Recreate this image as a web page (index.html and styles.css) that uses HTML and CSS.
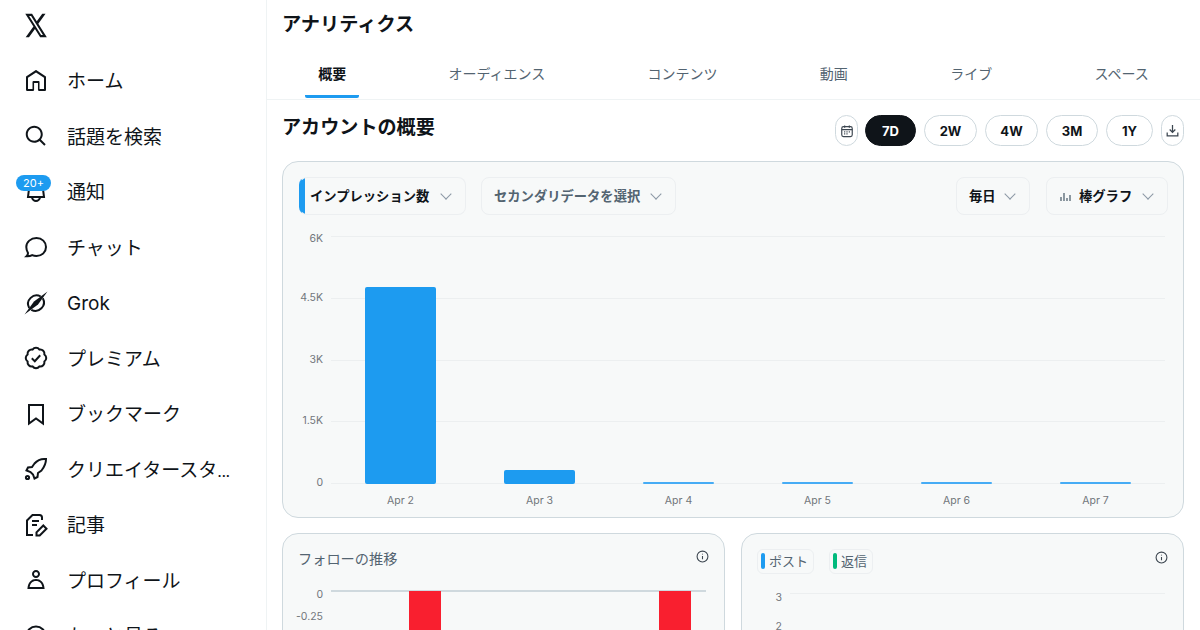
FILE: index.html
```html
<!DOCTYPE html>
<html lang="ja">
<head>
  <meta charset="UTF-8" />
  <title>アナリティクス</title>
  <link rel="stylesheet" href="styles.css">
</head>
<body>

  <aside class="sidebar">
    <div class="logo">
      <svg class="logo-icon" viewBox="0 0 24 24" preserveAspectRatio="none"><path class="fill" d="M18.244 2.25h3.308l-7.227 8.26 8.502 11.24H16.17l-5.214-6.817L4.99 21.75H1.68l7.73-8.835L1.254 2.25H8.08l4.713 6.231zm-1.161 17.52h1.833L7.084 4.126H5.117z"/></svg>
    </div>
    <nav>
      <a class="nav-item">
        <svg class="icon" viewBox="0 0 24 24"><path class="fill" d="M21.591 7.146L12.52 1.157c-.316-.21-.724-.21-1.04 0l-9.071 5.99c-.26.173-.409.456-.409.757v13.183c0 .502.418.913.929.913H9.14c.51 0 .929-.41.929-.913v-7.075h3.909v7.075c0 .502.417.913.928.913h6.165c.511 0 .929-.41.929-.913V7.904c0-.301-.158-.584-.408-.758zM20 20l-4.5.01.011-7.097c0-.502-.418-.913-.928-.913H9.44c-.511 0-.929.41-.929.913L8.5 20H4V8.773l8.011-5.342L20 8.764z"/></svg>
        <span>ホーム</span>
      </a>
      <a class="nav-item">
        <svg class="icon" viewBox="0 0 24 24"><path class="fill" d="M10.25 3.75c-3.59 0-6.5 2.91-6.5 6.5s2.91 6.5 6.5 6.5c1.795 0 3.419-.726 4.596-1.904 1.178-1.177 1.904-2.801 1.904-4.596 0-3.59-2.91-6.5-6.5-6.5zm-8.5 6.5c0-4.694 3.806-8.5 8.5-8.5s8.5 3.806 8.5 8.5c0 1.986-.682 3.815-1.824 5.262l4.781 4.781-1.414 1.414-4.781-4.781c-1.447 1.142-3.276 1.824-5.262 1.824-4.694 0-8.5-3.806-8.5-8.5z"/></svg>
        <span>話題を検索</span>
      </a>
      <a class="nav-item">
        <div class="icon-wrap">
          <svg class="icon" viewBox="0 0 24 24"><path class="fill" d="M19.993 9.042C19.48 5.017 16.054 2 11.996 2s-7.49 3.021-7.999 7.051L2.866 18H7.1c.463 2.282 2.481 4 4.9 4s4.437-1.718 4.9-4h4.236l-1.143-8.958zM12 20c-1.306 0-2.417-.835-2.829-2h5.658c-.412 1.165-1.523 2-2.829 2zm-6.866-4l.847-6.698C6.364 6.272 8.941 4 11.996 4s5.627 2.268 6.013 5.295L18.864 16H5.134z"/></svg>
          <b class="badge">20+</b>
        </div>
        <span>通知</span>
      </a>
      <a class="nav-item">
        <svg class="icon" viewBox="0 0 24 24"><path class="line" d="M12.500 3C18 3 22 7 22 12s-4 9-9.500 9c-1.600 0-3-.3-4.300-.9-1.500.9-3.500 1.300-5.700 1.200 1-.9 1.500-2 1.500-3.200C2.900 16.200 2.300 14.100 2.300 12 2.300 7 6.800 3 12.500 3z"/></svg>
        <span>チャット</span>
      </a>
      <a class="nav-item">
        <svg class="icon" viewBox="0 0 24 24"><path class="line" d="M16.800 5.500A8.500 8.500 0 0 0 5.200 17M7.300 18.800A8.500 8.500 0 0 0 18.800 7.200"/><path class="fill" d="M.5 23.500L10 10.500 23.500.5 14 13.500z"/></svg>
        <span class="latin">Grok</span>
      </a>
      <a class="nav-item">
        <svg class="icon" viewBox="0 0 24 24"><path class="line" d="M8.520 3.590c.8-1.100 2.040-1.840 3.480-1.840s2.680.74 3.490 1.840c1.340-.21 2.740.14 3.760 1.160s1.370 2.420 1.160 3.770c1.100.8 1.840 2.040 1.840 3.480s-.74 2.680-1.840 3.480c.21 1.340-.14 2.750-1.160 3.770s-2.420 1.370-3.760 1.160c-.8 1.100-2.050 1.840-3.490 1.840s-2.680-.74-3.480-1.840c-1.340.21-2.750-.14-3.770-1.160-1.010-1.020-1.370-2.420-1.160-3.770-1.090-.8-1.840-2.040-1.840-3.480s.75-2.680 1.840-3.480c-.21-1.350.14-2.750 1.160-3.770s2.430-1.370 3.770-1.160z"/><path class="line" d="M7.800 12.300l3 2.900 5.400-5.900"/></svg>
        <span>プレミアム</span>
      </a>
      <a class="nav-item">
        <svg class="icon" viewBox="0 0 24 24"><path class="line" d="M5 3h14v18.500l-7-5-7 5z"/></svg>
        <span>ブックマーク</span>
      </a>
      <a class="nav-item">
        <svg class="icon" viewBox="0 0 24 24"><path class="line" d="M22 2c-4.500-.5-8.500 1-11.500 4.500L8 10l-4 .5-1.500 3 4 1.500 2.500 2.500 1.500 4 3-1.500.5-4 3.500-2.500C19.500 11 22 7 22 2z"/><circle class="line" cx="3.500" cy="20.500" r="1.600"/></svg>
        <span>クリエイタースタ<span class="dots">...</span></span>
      </a>
      <a class="nav-item">
        <svg class="icon" viewBox="0 0 24 24"><path class="line" d="M18 7V4.500C18 3 17 2 15.500 2h-7L3 7.500V22h6"/><path class="line" d="M8 8h7M8 12h5"/><path class="line" d="M12.500 22.500v-3.200l6.800-6.800 3.200 3.200-6.800 6.800z"/></svg>
        <span>記事</span>
      </a>
      <a class="nav-item">
        <svg class="icon" viewBox="0 0 24 24"><path class="fill" d="M5.651 19h12.698c-.337-1.800-1.023-3.210-1.945-4.190C15.318 13.650 13.838 13 12 13s-3.317.65-4.404 1.810c-.922.98-1.608 2.390-1.945 4.190zm.486-5.560C7.627 11.850 9.648 11 12 11s4.373.85 5.863 2.440c1.477 1.580 2.366 3.800 2.632 6.460l.11 1.100H3.395l.11-1.100c.266-2.660 1.155-4.880 2.632-6.460zM12 4c-1.105 0-2 .9-2 2s.895 2 2 2 2-.9 2-2-.895-2-2-2zM8 6c0-2.210 1.791-4 4-4s4 1.790 4 4-1.791 4-4 4-4-1.790-4-4z"/></svg>
        <span>プロフィール</span>
      </a>
      <a class="nav-item">
        <svg class="icon" viewBox="0 0 24 24"><circle class="line" cx="12" cy="12" r="9.500"/></svg>
        <span>もっと見る</span>
      </a>
    </nav>
  </aside>

  <main class="content">
    <header class="page-head">
      <h1>アナリティクス</h1>
      <div class="tabs">
        <a class="tab active">概要</a>
        <a class="tab">オーディエンス</a>
        <a class="tab">コンテンツ</a>
        <a class="tab">動画</a>
        <a class="tab">ライブ</a>
        <a class="tab">スペース</a>
      </div>
    </header>

    <section class="overview">
      <div class="overview-head">
        <h2>アカウントの概要</h2>
        <div class="ranges">
          <button class="range icon-btn calendar">
            <svg viewBox="0 0 24 24" width="14" height="14"><rect class="line small" x="3" y="4.500" width="18" height="17" rx="3"/><path class="line small" d="M3 9.500h18M8 2.500v4M16 2.500v4M7 13.500h2M11 13.500h2M15 13.500h2M7 17h2M11 17h2"/></svg>
          </button>
          <button class="range selected">7D</button>
          <button class="range">2W</button>
          <button class="range">4W</button>
          <button class="range w-52">3M</button>
          <button class="range w-47">1Y</button>
          <button class="range icon-btn">
            <svg viewBox="0 0 24 24" width="15" height="15"><path class="line small" d="M12 3v12M7.500 10.500L12 15l4.500-4.500M3.500 15v5.500h17V15"/></svg>
          </button>
        </div>
      </div>

      <div class="card main-chart">
        <div class="filters">
          <div class="select primary w-167"><span>インプレッション数</span><i class="chev"></i></div>
          <div class="select muted w-195"><span>セカンダリデータを選択</span><i class="chev"></i></div>
          <div class="select w-74 push"><span>毎日</span><i class="chev"></i></div>
          <div class="select w-122">
            <svg class="bars-svg" viewBox="0 0 12 12" width="12" height="12"><path class="bars-icon" d="M2 11V7M5 11V3M8 11V8M11 11V5"/></svg>
            <span>棒グラフ</span><i class="chev"></i>
          </div>
        </div>

        <div class="plot">
          <div class="grid">
            <div class="grid-row top"><small>6K</small><hr></div>
            <div class="grid-row"><small>4.5K</small><hr></div>
            <div class="grid-row"><small>3K</small><hr></div>
            <div class="grid-row"><small>1.5K</small><hr></div>
            <div class="grid-row"><small>0</small><hr></div>
          </div>
          <div class="columns">
            <div class="col"><div class="bar" style="height: 197px"></div></div>
            <div class="col"><div class="bar" style="height: 14px"></div></div>
            <div class="col"><div class="bar thin"></div></div>
            <div class="col"><div class="bar thin"></div></div>
            <div class="col"><div class="bar thin"></div></div>
            <div class="col"><div class="bar thin"></div></div>
          </div>
        </div>
        <div class="x-axis">
          <span>Apr 2</span><span>Apr 3</span><span>Apr 4</span><span>Apr 5</span><span>Apr 6</span><span>Apr 7</span>
        </div>
      </div>

      <div class="lower">
        <div class="card small-card">
          <div class="small-head">
            <h3>フォローの推移</h3>
            <svg class="info" viewBox="0 0 24 24"><circle class="line small" cx="12" cy="12" r="10"/><path class="line small" d="M12 11v6M12 7v1.500"/></svg>
          </div>
          <div class="follow-plot">
            <div class="follow-labels"><small>0</small><small>-0.25</small></div>
            <div class="follow-area">
              <div class="red-bar"></div>
              <div class="red-bar"></div>
            </div>
          </div>
        </div>

        <div class="card small-card">
          <div class="small-head">
            <div class="chips">
              <div class="chip"><i class="tag blue"></i>ポスト</div>
              <div class="chip"><i class="tag green"></i>返信</div>
            </div>
            <svg class="info low" viewBox="0 0 24 24"><circle class="line small" cx="12" cy="12" r="10"/><path class="line small" d="M12 11v6M12 7v1.500"/></svg>
          </div>
          <div class="posts-plot">
            <div class="grid-row"><small>3</small><hr></div>
            <div class="grid-row"><small>2</small></div>
          </div>
        </div>
      </div>
    </section>
  </main>

</body>
</html>
```

FILE: styles.css
```css
body {
  margin: 0;
  display: flex;
  height: 630px;
  overflow: hidden;
  background-color: white;
  color: #0f1419;
  font-family: Inter, "Noto Sans CJK JP", sans-serif;
}

.fill {
  fill: #0f1419;
}

.line {
  fill: none;
  stroke: #0f1419;
  stroke-width: 2;
}

.line.small {
  stroke: #3c4650;
}

/* sidebar */
.sidebar {
  width: 266px;
  flex-shrink: 0;
  border-right: 1px solid #eff3f4;
}

.logo {
  height: 50px;
  padding-left: 24px;
  display: flex;
  align-items: center;
  margin-bottom: 3px;
}

.logo-icon {
  display: block;
  width: 24px;
  height: 29px;
}

.icon {
  display: block;
  width: 24px;
  height: 24px;
}

.nav-item {
  display: flex;
  align-items: center;
  gap: 19px;
  height: 55.5px;
  padding-left: 24px;
  font-size: 19px;
  white-space: nowrap;
}

.nav-item > span {
  margin-top: -2px;
}

.nav-item > span.latin {
  margin-top: 2px;
}

.dots {
  font-size: 16px;
  letter-spacing: -0.5px;
}

.icon-wrap {
  position: relative;
}

.badge {
  position: absolute;
  left: -8px;
  top: -5px;
  width: 35px;
  height: 16px;
  border-radius: 8px;
  background-color: #1d9bf0;
  color: white;
  font-size: 11px;
  font-weight: 400;
  line-height: 16px;
  text-align: center;
}

/* main */
.content {
  flex: 1;
  min-width: 0;
}

.page-head {
  border-bottom: 1px solid #eff3f4;
}

h1 {
  margin: 0;
  padding: 12px 0 10px 15px;
  font-size: 19.2px;
  font-weight: 700;
  line-height: 24px;
}

.tabs {
  display: flex;
  justify-content: space-around;
  padding-bottom: 1px;
}

.tab {
  padding: 18px 13px 11px;
  border-bottom: 3px solid transparent;
  border-radius: 2px;
  color: #536471;
  font-size: 14px;
  line-height: 20px;
}

.tab.active {
  border-bottom-color: #1d9bf0;
  color: #0f1419;
  font-weight: 700;
}

.overview {
  padding: 14px 16px 0 15px;
}

.overview-head {
  display: flex;
  justify-content: space-between;
}

h2 {
  margin: 1px 0 -1px;
  font-size: 19.1px;
  font-weight: 700;
  line-height: 24px;
}

.ranges {
  display: flex;
  gap: 8px;
  margin-top: 1px;
}

.range {
  width: 53px;
  height: 31px;
  padding: 0;
  border: 1px solid #cfd9de;
  border-radius: 16px;
  background-color: white;
  color: #0f1419;
  font-family: inherit;
  font-size: 13px;
  font-weight: 700;
}

.range.selected {
  width: 51px;
  border-color: #0f1419;
  background-color: #0f1419;
  color: white;
}

.range.w-52 { width: 52px; }
.range.w-47 { width: 47px; }

.icon-btn {
  width: 23px;
  display: flex;
  align-items: center;
  justify-content: center;
}

.calendar {
  margin-right: -1px;
}

.card {
  border: 1px solid #cfd9de;
  border-radius: 16px;
  background-color: #f7f9f9;
}

.main-chart {
  margin-top: 15px;
  padding: 15px 15px 8px 16px;
}

.filters {
  display: flex;
  gap: 15px;
}

.select {
  display: flex;
  align-items: center;
  box-sizing: border-box;
  height: 38px;
  padding: 0 13px 0 12px;
  border: 1px solid #eceff1;
  border-radius: 8px;
  color: #0f1419;
  font-size: 13.3px;
  font-weight: 700;
  white-space: nowrap;
}

.select span {
  margin: -2px auto 0 0;
}

.select.primary {
  padding-left: 10px;
  border-left-color: #1d9bf0;
  background: linear-gradient(to right, #1d9bf0 6px, transparent 6px) border-box;
}

.select.muted { color: #536471; }
.select.w-167 { width: 167px; }
.select.w-195 { width: 195px; }
.select.w-74 { width: 74px; }
.select.w-122 { width: 122px; }

.select.push {
  margin: 0 1px 0 auto;
}

.chev {
  flex-shrink: 0;
  width: 7px;
  height: 7px;
  margin: -4px 2px 0 0;
  border-right: 1px solid #8b98a5;
  border-bottom: 1px solid #8b98a5;
  transform: rotate(45deg);
}

.bars-svg {
  margin-right: 8px;
  flex-shrink: 0;
}

.bars-icon {
  fill: none;
  stroke: #536471;
  stroke-width: 1.3;
}

/* main chart */
.plot {
  position: relative;
  height: 248px;
  margin: 21px 3px 0 0;
}

.grid {
  position: absolute;
  inset: 0;
  display: flex;
  flex-direction: column;
  justify-content: space-between;
}

.grid-row {
  display: flex;
  align-items: center;
  height: 1px;
}

.grid-row small,
.follow-labels small {
  color: #71767b;
  font-size: 10.5px;
  text-align: right;
}

.grid-row small {
  width: 24px;
  padding-bottom: 2px;
  flex-shrink: 0;
}

.grid-row.top small {
  padding: 4px 0 0;
}

.grid-row hr {
  flex: 1;
  height: 1px;
  margin: 0 0 0 8px;
  border: none;
  background-color: #eceff0;
}

.columns {
  position: absolute;
  inset: 0 0 0 32px;
  display: flex;
}

.col {
  flex: 1;
  display: flex;
  align-items: flex-end;
  justify-content: center;
}

.bar {
  width: 71px;
  border-radius: 2px;
  background-color: #1d9bf0;
}

.bar.thin {
  height: 2px;
  background-color: #46acf5;
}

.x-axis {
  display: flex;
  margin: 9px 3px 0 32px;
  height: 16px;
  color: #71767b;
  font-size: 10.5px;
  line-height: 16px;
}

.x-axis span {
  flex: 1;
  text-align: center;
}

/* lower cards */
.lower {
  display: grid;
  grid-template-columns: 1fr 1fr;
  gap: 16px;
  margin-top: 15px;
}

.small-card {
  height: 300px;
  padding: 15px 16px 15px 15px;
}

.small-head {
  display: flex;
  justify-content: space-between;
  align-items: flex-start;
}

h3 {
  margin: 0;
  color: #536471;
  font-size: 14.2px;
  font-weight: 400;
  line-height: 20px;
}

.info {
  width: 13px;
  height: 13px;
  margin: 1px -1px 0 0;
}

.info.low {
  margin-top: 2px;
}

.follow-plot {
  display: flex;
  margin-top: 21px;
}

.follow-labels {
  width: 25px;
  display: flex;
  flex-direction: column;
  gap: 9px;
  margin-top: -2px;
  flex-shrink: 0;
  align-items: flex-end;
}

.follow-area {
  flex: 1;
  display: flex;
  gap: 218px;
  height: 60px;
  margin: 0 2px 0 8px;
  padding-left: 78px;
  border-top: 2px solid #cfd9de;
}

.red-bar {
  width: 32px;
  height: 60px;
  margin-top: -1px;
  background-color: #f91f2f;
}

.chips {
  display: flex;
  gap: 15px;
}

.chip {
  display: flex;
  align-items: center;
  gap: 4px;
  box-sizing: border-box;
  height: 25px;
  padding: 0 5px 2px 3px;
  border: 1px solid #eceff1;
  border-radius: 6px;
  color: #536471;
  font-size: 13px;
}

.tag {
  width: 4px;
  height: 16px;
  border-radius: 2px;
}

.tag.blue { background-color: #1d9bf0; }
.tag.green { background-color: #00ba7c; }

.posts-plot {
  display: flex;
  flex-direction: column;
  gap: 28px;
  margin: 19px 2px 0 1px;
}

.posts-plot .grid-row small {
  padding: 8px 0 0;
}
```
